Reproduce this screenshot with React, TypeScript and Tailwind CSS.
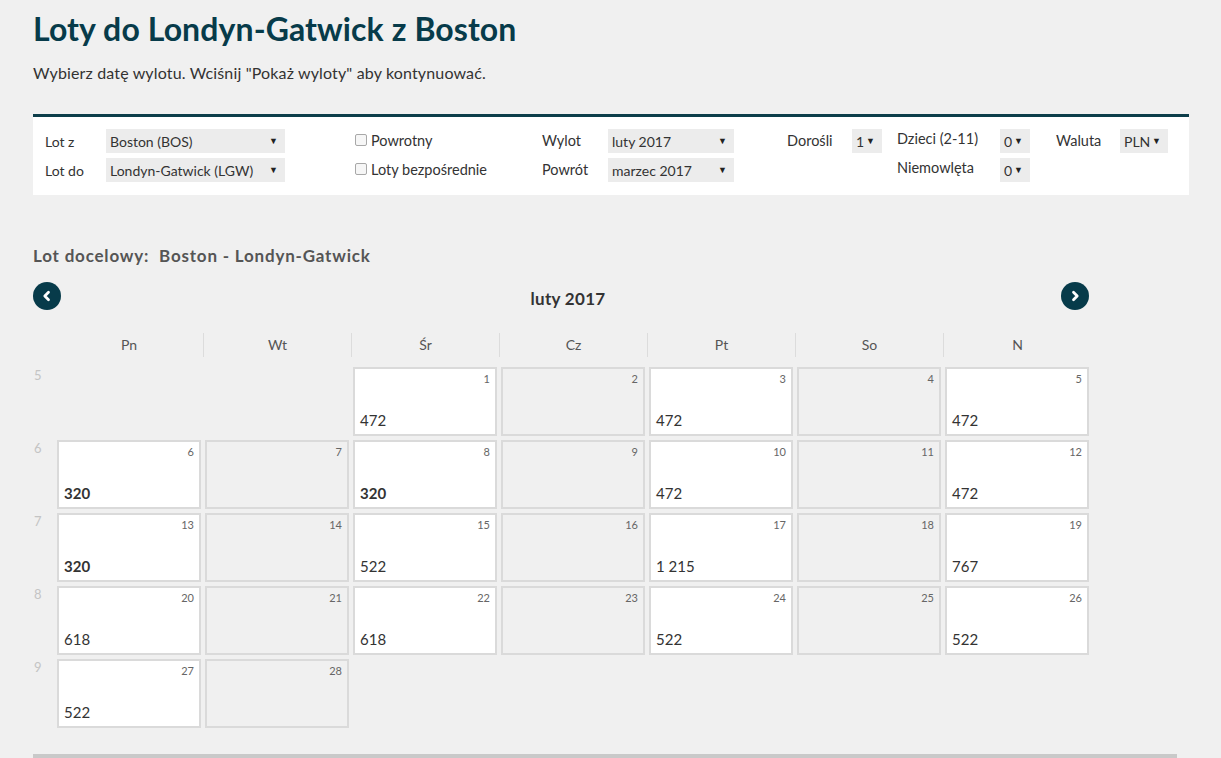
import React from 'react';

type Day = { d: number; price?: string; best?: boolean; off?: boolean };

const weeks: { n: number; days: (Day | null)[] }[] = [
    { n: 5, days: [null, null, { d: 1, price: '472' }, { d: 2, off: true }, { d: 3, price: '472' }, { d: 4, off: true }, { d: 5, price: '472' }] },
    { n: 6, days: [{ d: 6, price: '320', best: true }, { d: 7, off: true }, { d: 8, price: '320', best: true }, { d: 9, off: true }, { d: 10, price: '472' }, { d: 11, off: true }, { d: 12, price: '472' }] },
    { n: 7, days: [{ d: 13, price: '320', best: true }, { d: 14, off: true }, { d: 15, price: '522' }, { d: 16, off: true }, { d: 17, price: '1 215' }, { d: 18, off: true }, { d: 19, price: '767' }] },
    { n: 8, days: [{ d: 20, price: '618' }, { d: 21, off: true }, { d: 22, price: '618' }, { d: 23, off: true }, { d: 24, price: '522' }, { d: 25, off: true }, { d: 26, price: '522' }] },
    { n: 9, days: [{ d: 27, price: '522' }, { d: 28, off: true }, null, null, null, null, null] },
];

const dayNames = ['Pn', 'Wt', 'Śr', 'Cz', 'Pt', 'So', 'N'];

const Select = ({ value, w }: { value: string; w: string }) => (
    <div className={`${w} h-6 shrink-0 bg-[#ececec] flex items-center justify-between pl-1 pr-[7px] text-[14px] text-[#333] whitespace-nowrap`}>
        <span>{value}</span>
        <span className="text-[9px] text-[#222]">▼</span>
    </div>
);

const Check = ({ label }: { label: string }) => (
    <div className="h-6 flex items-center gap-[4px] text-[14.5px] text-[#333] whitespace-nowrap">
        <span className="w-[12px] h-[12px] rounded-[2px] border border-[#a8a8a8] bg-[#f6f6f6] -mt-[3px]"></span>
        <span>{label}</span>
    </div>
);

const Arrow = ({ dir }: { dir: 'l' | 'r' }) => (
    <div className="w-7 h-7 rounded-full bg-[#073b4a] flex items-center justify-center">
        <svg width="12" height="12" viewBox="0 0 12 12">
            <path d={dir === 'l' ? 'M7.5 2.3 L3.8 6 L7.5 9.7' : 'M4.5 2.3 L8.2 6 L4.5 9.7'} stroke="#fff" strokeWidth="2.8" fill="none" strokeLinecap="round" strokeLinejoin="round" />
        </svg>
    </div>
);

const App = () => {
    return (
        <div className="bg-[#f0f0f0] font-['Lato',sans-serif] text-[#333] overflow-hidden h-[758px]">
            <div className="pl-[33px] w-[1189px]">
                {/* Heading */}
                <h1 className="pt-[9px] text-[32px] leading-[40px] font-bold text-[#073b4a] tracking-[0.1px]">Loty do Londyn-Gatwick z Boston</h1>
                <p className="mt-[14px] text-[16px] leading-[20px] text-[#333] tracking-[0.15px]">Wybierz datę wylotu. Wciśnij "Pokaż wyloty" aby kontynuować.</p>

                {/* Search form */}
                <div className="mt-[31px] border-t-[3px] border-[#0d3e4a] bg-white pl-3 pt-3 pb-[13px] flex">
                    <div className="flex flex-col gap-[5px] w-[310px] shrink-0">
                        <div className="flex items-center"><span className="w-[61px] text-[14px]">Lot z</span><Select value="Boston (BOS)" w="w-[179px]" /></div>
                        <div className="flex items-center"><span className="w-[61px] text-[14px]">Lot do</span><Select value="Londyn-Gatwick (LGW)" w="w-[179px]" /></div>
                    </div>
                    <div className="flex flex-col gap-[5px] w-[187px] shrink-0">
                        <Check label="Powrotny" />
                        <Check label="Loty bezpośrednie" />
                    </div>
                    <div className="flex flex-col gap-[5px] w-[245px] shrink-0">
                        <div className="flex items-center"><span className="w-[66px] text-[14.5px]">Wylot</span><Select value="luty 2017" w="w-[126px]" /></div>
                        <div className="flex items-center"><span className="w-[66px] text-[14.5px]">Powrót</span><Select value="marzec 2017" w="w-[126px]" /></div>
                    </div>
                    <div className="flex items-start w-[110px] shrink-0">
                        <span className="w-[65px] text-[14.5px] leading-6">Dorośli</span><Select value="1" w="w-[30px]" />
                    </div>
                    <div className="flex flex-col gap-[5px] flex-1">
                        <div className="flex items-center whitespace-nowrap"><span className="w-[103px] shrink-0 text-[14.5px] -mt-[4px]">Dzieci (2-11)</span><Select value="0" w="w-[30px]" /><span className="ml-[26px] w-[64px] shrink-0 text-[14.5px]">Waluta</span><Select value="PLN" w="w-[48px]" /></div>
                        <div className="flex items-center whitespace-nowrap"><span className="w-[103px] shrink-0 text-[14.5px] -mt-[4px]">Niemowlęta</span><Select value="0" w="w-[30px]" /></div>
                    </div>
                </div>

                {/* Calendar */}
                <h2 className="mt-[51px] text-[17px] leading-[20px] font-bold text-[#555] tracking-[0.8px]">Lot docelowy:&nbsp; Boston - Londyn-Gatwick</h2>
                <div className="mt-[14px] w-[1056px] flex items-center justify-between">
                    <Arrow dir="l" />
                    <span className="ml-[14px] text-[17px] font-bold text-[#333] mt-[6px] tracking-[0.3px]">luty 2017</span>
                    <Arrow dir="r" />
                </div>

                <div className="mt-[21px] grid grid-cols-[22px_repeat(7,148px)]">
                    <div></div>
                    {dayNames.map((n, i) => (
                        <div key={n} className={`h-6 flex items-center justify-center text-[14px] text-[#555] ${i > 0 ? 'border-l border-[#dcdcdc]' : ''}`}>{n}</div>
                    ))}
                </div>

                <div className="mt-[10px] flex flex-col gap-[4px]">
                    {weeks.map(w => (
                        <div key={w.n} className="grid grid-cols-[22px_repeat(7,148px)]">
                            <div className="text-[13px] text-[#c4c4c4] pl-[1px] leading-[16px]">{w.n}</div>
                            {w.days.map((day, i) => (
                                <div key={i} className="px-[2px]">
                                    {day ? (
                                        <div className={`h-[69px] border-2 border-[#dadada] flex flex-col justify-between ${day.off ? 'bg-[#f0f0f0]' : 'bg-white'}`}>
                                            <div className="text-right pr-[5px] pt-[3px] text-[11px] leading-[14px] text-[#666]">{day.d}</div>
                                            <div className={`pl-[5px] pb-[4px] text-[15px] leading-[20px] text-[#333] ${day.best ? 'font-bold' : ''}`}>{day.price}</div>
                                        </div>
                                    ) : null}
                                </div>
                            ))}
                        </div>
                    ))}
                </div>

                <div className="mt-[26px] w-[1144px] h-[4px] bg-[#c9c9c9]"></div>
            </div>
        </div>
    );
};

export default App;
